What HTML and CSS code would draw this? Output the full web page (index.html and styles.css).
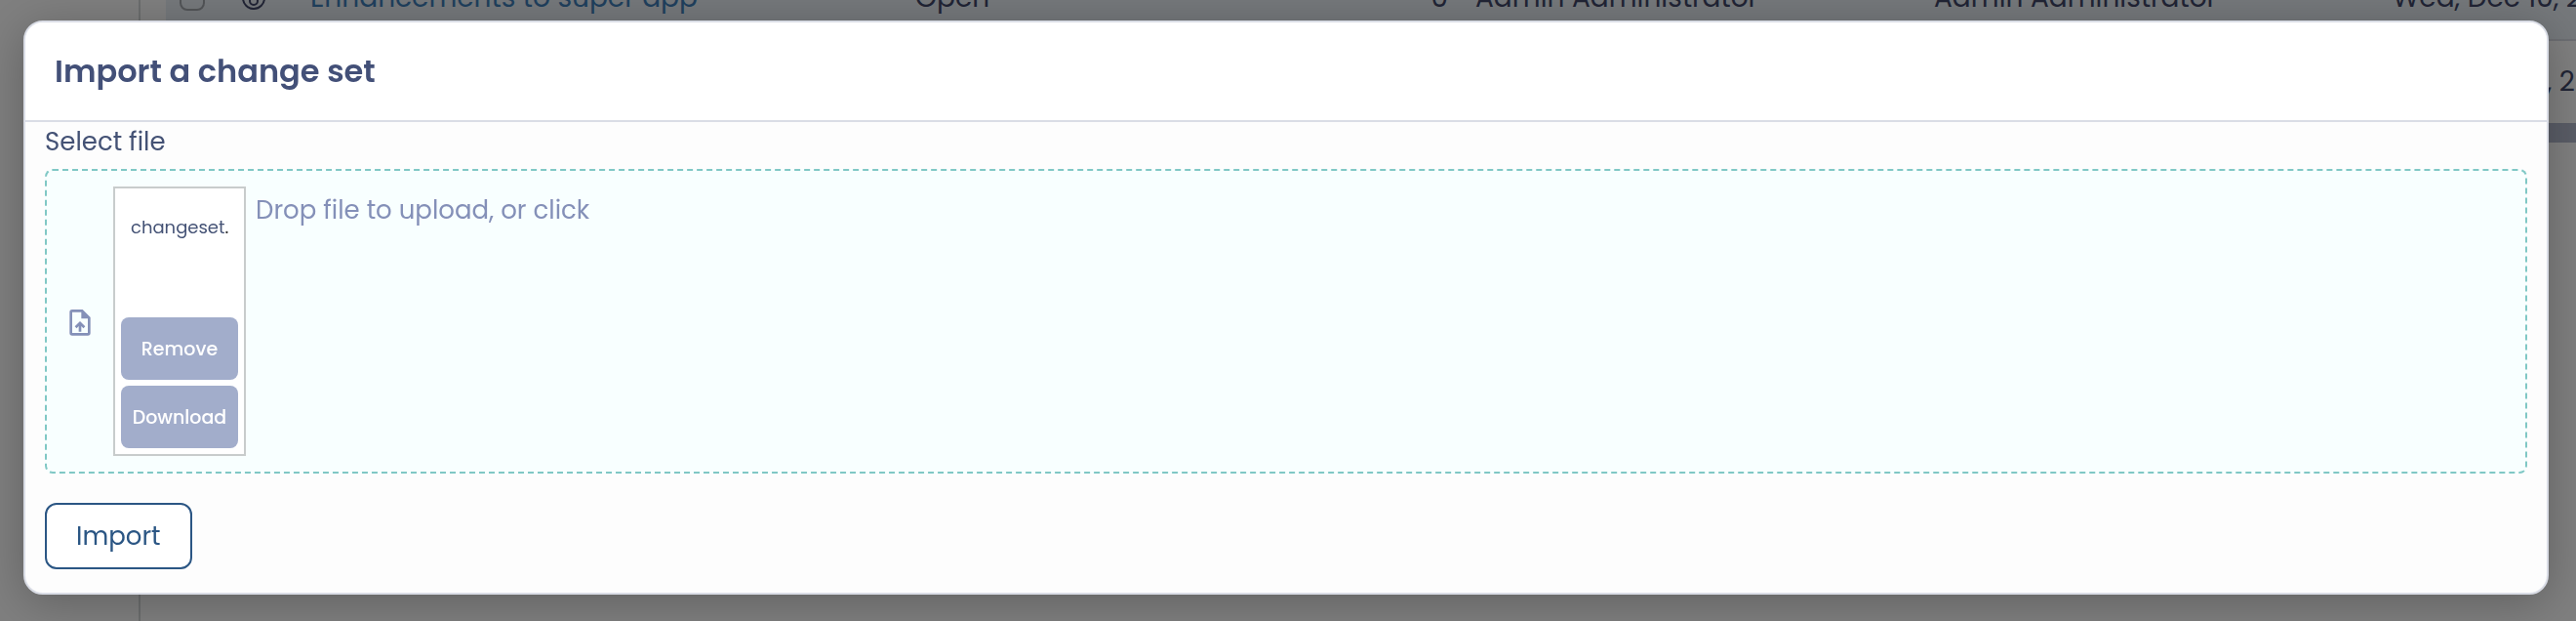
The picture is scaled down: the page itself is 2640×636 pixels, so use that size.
FILE: index.html
```html
<!DOCTYPE html>
<html lang="en">
<head>
  <meta charset="UTF-8">
  <meta name="viewport" content="width=device-width, initial-scale=1.0">
  <title>Import a change set</title>
  <link rel="stylesheet" href="styles.css">
</head>
<body>

  <!-- Change set list -->
  <div class="app">
    <aside class="sidebar"></aside>
    <main class="content">
      <table class="records">
        <colgroup>
          <col class="col-check">
          <col class="col-info">
          <col class="col-name">
          <col class="col-state">
          <col class="col-count">
          <col class="col-user">
          <col class="col-user">
          <col class="col-date">
        </colgroup>
        <tbody>
          <tr class="striped">
            <td><input type="checkbox" class="row-check" aria-label="Select row"></td>
            <td>
              <svg class="info-icon" viewBox="0 0 24 24" fill="none" stroke="currentColor" stroke-width="2">
                <circle cx="12" cy="12" r="11"/>
                <circle cx="12" cy="15" r="4"/>
              </svg>
            </td>
            <td><a href="#" class="row-link">Enhancements to super app</a></td>
            <td>Open</td>
            <td class="num">0</td>
            <td>Admin Administrator</td>
            <td>Admin Administrator</td>
            <td>Wed, Dec 10, 2025</td>
          </tr>
          <tr>
            <td></td>
            <td></td>
            <td></td>
            <td></td>
            <td></td>
            <td></td>
            <td></td>
            <td>Tue, Dec 23, 2025</td>
          </tr>
        </tbody>
      </table>
      <div class="scrollbar"></div>
    </main>
  </div>

  <!-- Import dialog -->
  <div class="overlay">
    <div class="modal" role="dialog" aria-labelledby="modal-title">
      <header class="modal-header">
        <h2 id="modal-title" class="modal-title">Import a change set</h2>
      </header>

      <div class="modal-body">
        <span class="field-label">Select file</span>
        <div class="dropzone">
          <svg class="upload-icon" viewBox="0 0 24 24" fill="currentColor">
            <path fill-rule="evenodd" d="M6 3h8l6 6v12a2 2 0 0 1-2 2H6a2 2 0 0 1-2-2V5a2 2 0 0 1 2-2zm0 2v16h12V10h-5V5z"/>
            <path d="M12 12l4 4-1.400 1.400-1.600-1.600V20h-2v-4.200l-1.600 1.600L8 16z"/>
          </svg>
          <div class="file-card">
            <div class="file-name">changeset<span class="file-dot">.</span></div>
            <button type="button" class="file-btn">Remove</button>
            <button type="button" class="file-btn">Download</button>
          </div>
          <span class="drop-text">Drop file to upload, or click</span>
        </div>
        <button type="button" class="import-btn">Import</button>
      </div>
    </div>
  </div>

</body>
</html>
```
FILE: styles.css
```css
* {
  box-sizing: border-box;
}

body {
  margin: 0;
  font-family: Poppins, Inter, sans-serif;
  font-size: 26px;
  line-height: 40px;
  color: #445275;
  background-color: #fff;
  overflow: hidden;
}

/* Page behind the dialog */
.app {
  display: flex;
  height: 100vh;
  overflow: hidden;
}

.sidebar {
  flex: 0 0 144px;
  border-right: 2px solid #d6dadb;
}

.content {
  flex: 1;
  min-width: 0;
  padding-left: 26px;
  overflow: hidden;
}

/* List is scrolled so the first row is cut by the window edge */
.records {
  width: 2700px;
  margin-top: -44px;
  table-layout: fixed;
  border-collapse: collapse;
  font-size: 28px;
}

.records td {
  height: 85px;
  padding: 0 14px;
  color: #42486a;
  border-bottom: 2px solid #d8dbe4;
  white-space: nowrap;
}

.records tr:last-child td {
  border-bottom: none;
}

.records .striped {
  background-color: #eaf0f6;
}

.records .num {
  text-align: right;
}

.col-check { width: 64px; }
.col-info { width: 70px; }
.col-name { width: 620px; }
.col-state { width: 274px; }
.col-count { width: 300px; }
.col-user { width: 470px; }

.row-check {
  display: block;
  width: 26px;
  height: 26px;
  margin: 0;
  appearance: none;
  border: 2px solid #a4a8ae;
  border-radius: 8px;
}

.info-icon {
  display: block;
  width: 24px;
  height: 24px;
}

.row-link {
  color: #3f7fba;
  text-decoration: none;
}

.scrollbar {
  height: 20px;
  background-color: #b4bacd;
}

/* Dialog */
.overlay {
  position: fixed;
  inset: 0;
  padding: 21px 28px 0 24px;
  background-color: rgba(0, 0, 0, 0.5);
}

.modal {
  border: 2px solid #dadde6;
  border-radius: 20px;
  background-color: #fdfdfd;
  box-shadow: 0 8px 48px rgba(0, 0, 0, 0.25);
  overflow: hidden;
}

.modal-header {
  padding: 30px;
  background-color: #fff;
  border-bottom: 2px solid #dadde6;
}

.modal-title {
  margin: 0;
  font-size: 32px;
  font-weight: 600;
  line-height: 40px;
  color: #435078;
}

.modal-body {
  padding: 0 20px 24px;
}

.field-label {
  display: block;
  margin-bottom: 8px;
}

.dropzone {
  display: flex;
  align-items: flex-start;
  margin-bottom: 30px;
  padding: 16px 18px;
  border: 2px dashed #80c8c5;
  border-radius: 8px;
  background-color: #f8ffff;
  color: #8490b8;
}

.upload-icon {
  align-self: center;
  width: 32px;
  height: 32px;
  margin-right: 18px;
}

.file-card {
  display: flex;
  flex-direction: column;
  gap: 6px;
  width: 136px;
  padding: 6px;
  border: 2px solid #c8cccc;
  background-color: #fff;
}

.file-name {
  height: 120px;
  padding: 14px 10px;
  font-size: 18px;
  color: #445275;
  white-space: nowrap;
  overflow: hidden;
}

.file-dot {
  color: #333;
}

.file-btn {
  height: 64px;
  padding: 0;
  border: none;
  border-radius: 8px;
  background-color: #a2adcb;
  color: #fff;
  font-family: inherit;
  font-size: 19px;
  font-weight: 500;
  cursor: pointer;
}

.drop-text {
  margin-left: 10px;
  padding-top: 4px;
}

.import-btn {
  display: block;
  height: 68px;
  padding: 0 30px;
  border: 2px solid #2b5684;
  border-radius: 12px;
  background-color: #fff;
  color: #2b5684;
  font-family: inherit;
  font-size: 26px;
  cursor: pointer;
}
```
